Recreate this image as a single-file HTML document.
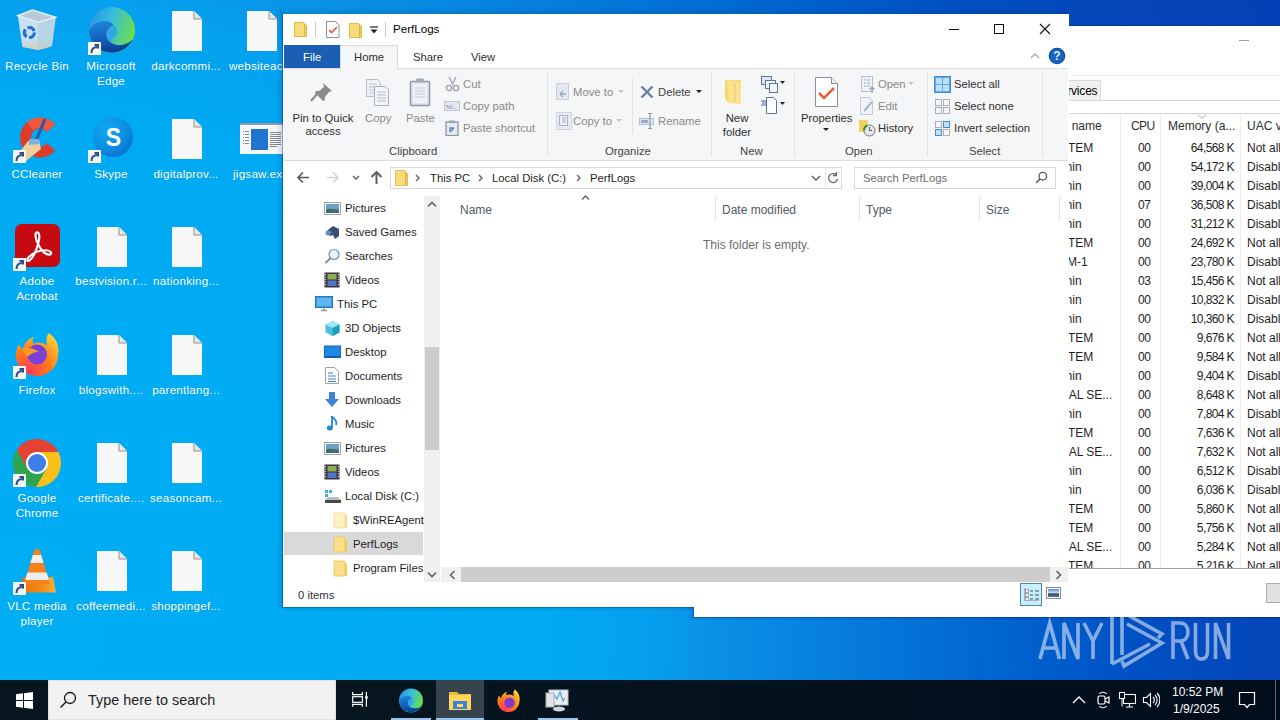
<!DOCTYPE html>
<html><head><meta charset="utf-8">
<style>
*{box-sizing:border-box;margin:0;padding:0}
html,body{width:1280px;height:720px;overflow:hidden}
body{position:relative;font-family:"Liberation Sans",sans-serif;font-size:11.3px;color:#1e1e1e;
background:radial-gradient(circle at 16px 626px,#00aef4 0px,#00aaf2 520px,#05a0ef 630px,#0a92e7 690px,#0064d0 985px,#0050c4 1120px,#0646b8 1264px,#0440b5 1410px);}
.a{position:absolute}
.t{position:absolute;white-space:nowrap}
/* desktop */
.dl{position:absolute;width:76px;text-align:center;color:#fff;font-size:11.6px;line-height:15px;letter-spacing:.25px;text-shadow:0 0 1px rgba(0,40,90,.2)}
.doc{position:absolute;width:32px;height:41px;background:linear-gradient(#fbfbfb,#f0f0f0);clip-path:polygon(0 0,72% 0,100% 20%,100% 100%,0 100%)}
.doc:after{content:"";position:absolute;right:0;top:0;width:9px;height:8px;background:#d8d8d8;clip-path:polygon(0 0,0 100%,100% 100%)}
/* windows */
#tm{position:absolute;left:694px;top:26px;width:586px;height:591px;background:#fff}
#ex{position:absolute;left:283px;top:14px;width:786px;height:593px;background:#fff}
/* taskbar */
#tb{position:absolute;left:0;top:680px;width:1280px;height:40px;background:linear-gradient(90deg,#07161e 0%,#05141e 45%,#020d1c 100%)}
#exc .t{margin-top:1px}
#exc .tt{margin-top:0}
</style></head>
<body>
<div id="desk">
<!-- labels -->
<div class="dl" style="left:-1px;top:58px">Recycle Bin</div>
<div class="dl" style="left:73px;top:58px">Microsoft<br>Edge</div>
<div class="dl" style="left:148px;top:58px">darkcommi...</div>
<div class="dl" style="left:223px;top:58px">websiteac...</div>
<div class="dl" style="left:-1px;top:166px">CCleaner</div>
<div class="dl" style="left:73px;top:166px">Skype</div>
<div class="dl" style="left:148px;top:166px">digitalprov...</div>
<div class="dl" style="left:223px;top:166px">jigsaw.exe</div>
<div class="dl" style="left:-1px;top:273px">Adobe<br>Acrobat</div>
<div class="dl" style="left:73px;top:273px">bestvision.r...</div>
<div class="dl" style="left:148px;top:273px">nationking...</div>
<div class="dl" style="left:-1px;top:382px">Firefox</div>
<div class="dl" style="left:73px;top:382px">blogswith....</div>
<div class="dl" style="left:148px;top:382px">parentlang...</div>
<div class="dl" style="left:-1px;top:490px">Google<br>Chrome</div>
<div class="dl" style="left:73px;top:490px">certificate....</div>
<div class="dl" style="left:148px;top:490px">seasoncam...</div>
<div class="dl" style="left:-1px;top:598px">VLC media<br>player</div>
<div class="dl" style="left:73px;top:598px">coffeemedi...</div>
<div class="dl" style="left:148px;top:598px">shoppingef...</div>
<!-- document icons -->
<svg class="a" style="left:171px;top:10px" width="32" height="42" viewBox="0 0 32 42"><path d="M1 1h22l8 8v32H1z" fill="#f7f7f8"/><path d="M23 1v8h8" fill="#e6e6e6" stroke="#9b8f85" stroke-width="1"/></svg>
<svg class="a" style="left:246px;top:10px" width="32" height="42" viewBox="0 0 32 42"><path d="M1 1h22l8 8v32H1z" fill="#f7f7f8"/><path d="M23 1v8h8" fill="#e6e6e6" stroke="#9b8f85" stroke-width="1"/></svg>
<svg class="a" style="left:171px;top:118px" width="32" height="42" viewBox="0 0 32 42"><path d="M1 1h22l8 8v32H1z" fill="#f7f7f8"/><path d="M23 1v8h8" fill="#e6e6e6" stroke="#9b8f85" stroke-width="1"/></svg>
<svg class="a" style="left:96px;top:226px" width="32" height="42" viewBox="0 0 32 42"><path d="M1 1h22l8 8v32H1z" fill="#f7f7f8"/><path d="M23 1v8h8" fill="#e6e6e6" stroke="#9b8f85" stroke-width="1"/></svg>
<svg class="a" style="left:171px;top:226px" width="32" height="42" viewBox="0 0 32 42"><path d="M1 1h22l8 8v32H1z" fill="#f7f7f8"/><path d="M23 1v8h8" fill="#e6e6e6" stroke="#9b8f85" stroke-width="1"/></svg>
<svg class="a" style="left:96px;top:334px" width="32" height="42" viewBox="0 0 32 42"><path d="M1 1h22l8 8v32H1z" fill="#f7f7f8"/><path d="M23 1v8h8" fill="#e6e6e6" stroke="#9b8f85" stroke-width="1"/></svg>
<svg class="a" style="left:171px;top:334px" width="32" height="42" viewBox="0 0 32 42"><path d="M1 1h22l8 8v32H1z" fill="#f7f7f8"/><path d="M23 1v8h8" fill="#e6e6e6" stroke="#9b8f85" stroke-width="1"/></svg>
<svg class="a" style="left:96px;top:442px" width="32" height="42" viewBox="0 0 32 42"><path d="M1 1h22l8 8v32H1z" fill="#f7f7f8"/><path d="M23 1v8h8" fill="#e6e6e6" stroke="#9b8f85" stroke-width="1"/></svg>
<svg class="a" style="left:171px;top:442px" width="32" height="42" viewBox="0 0 32 42"><path d="M1 1h22l8 8v32H1z" fill="#f7f7f8"/><path d="M23 1v8h8" fill="#e6e6e6" stroke="#9b8f85" stroke-width="1"/></svg>
<svg class="a" style="left:96px;top:550px" width="32" height="42" viewBox="0 0 32 42"><path d="M1 1h22l8 8v32H1z" fill="#f7f7f8"/><path d="M23 1v8h8" fill="#e6e6e6" stroke="#9b8f85" stroke-width="1"/></svg>
<svg class="a" style="left:171px;top:550px" width="32" height="42" viewBox="0 0 32 42"><path d="M1 1h22l8 8v32H1z" fill="#f7f7f8"/><path d="M23 1v8h8" fill="#e6e6e6" stroke="#9b8f85" stroke-width="1"/></svg>
<!-- recycle bin -->
<svg class="a" style="left:13px;top:6px" width="48" height="48" viewBox="0 0 48 48"><defs><linearGradient id="rbg" x1="0" y1="0" x2="0" y2="1"><stop offset="0" stop-color="#e2ebf2"/><stop offset=".7" stop-color="#dfe6ec"/><stop offset="1" stop-color="#f3d3b8"/></linearGradient><linearGradient id="rbg2" x1="0" y1="0" x2="0" y2="1"><stop offset="0" stop-color="#cfdbe4"/><stop offset=".75" stop-color="#d3dbe2"/><stop offset="1" stop-color="#f0cdb0"/></linearGradient></defs><path d="M4.8 9.6L25.8 16.2 25.8 44.2 9.4 41.1z" fill="url(#rbg)" opacity=".88"/><path d="M25.8 16.2L42.9 11.2 39 40.3 25.8 44.2z" fill="url(#rbg2)" opacity=".88"/><path d="M4.8 9.6L19.5 3.8 42.9 11.2 25.8 16.2z" fill="#c2d2de" stroke="#eef5fa" stroke-width="1.2"/><path d="M8 10l11.5-4.2 19 6-12.5 3.4z" fill="#b8cad8"/><circle cx="16.4" cy="26.5" r="5" fill="none" stroke="#1d6ed0" stroke-width="3.2" stroke-dasharray="8 2.5"/></svg>
<!-- edge -->
<svg class="a" style="left:87px;top:6px" width="50" height="48" viewBox="0 0 50 48"><defs><linearGradient id="eg1" x1="0" y1=".2" x2="1" y2=".5"><stop offset="0" stop-color="#2596e0"/><stop offset=".45" stop-color="#35bce0"/><stop offset="1" stop-color="#6ee048"/></linearGradient><linearGradient id="eg2" x1=".2" y1="0" x2=".5" y2="1"><stop offset="0" stop-color="#1e88de"/><stop offset="1" stop-color="#0a3f96"/></linearGradient></defs><circle cx="25" cy="24" r="23" fill="url(#eg1)"/><path d="M2 25A23 23 0 0 0 46 33C40 40 29 41 23 36C17 30 19 22 27 19C20 12 7 14 2 25Z" fill="url(#eg2)"/><path d="M23 36C17 30 19 22 27 19C30 22 31 26 29 29C27 32 24 34 23 36Z" fill="#33a6e8"/></svg>
<!-- ccleaner -->
<svg class="a" style="left:13px;top:114px" width="50" height="48" viewBox="0 0 50 48"><path d="M42.3 10.6A20 20 0 1 0 42.3 36.4L33.9 29.3A9 9 0 1 1 33.9 17.7Z" fill="#de3b2b"/><path d="M42.3 10.6A20 20 0 0 0 14 8L20 16A9 9 0 0 1 33.9 17.7Z" fill="#ef5a3e"/><path d="M32 5L23 27" stroke="#2a5aa5" stroke-width="3"/><path d="M15 27l11-1 2 9-15 12-8-7z" fill="#f0cf9e"/><path d="M16 25l10 0 1 5-11 1z" fill="#7fb0dc"/></svg>
<!-- skype -->
<svg class="a" style="left:87px;top:114px" width="50" height="48" viewBox="0 0 50 48"><defs><radialGradient id="skg" cx=".35" cy=".3" r=".8"><stop offset="0" stop-color="#12a6f2"/><stop offset=".6" stop-color="#0c8ee2"/><stop offset="1" stop-color="#0a6fcc"/></radialGradient></defs><circle cx="26" cy="23" r="20" fill="url(#skg)"/><text x="26.5" y="32.5" text-anchor="middle" font-family="Liberation Sans" font-weight="bold" font-size="25" fill="#fff" transform="translate(26.5 0) scale(.92 1) translate(-26.5 0)">S</text></svg>
<!-- jigsaw -->
<svg class="a" style="left:240px;top:122px" width="43" height="32" viewBox="0 0 43 32"><rect x="0" y="1" width="43" height="31" fill="#f4f6f9"/><rect x="0" y="1" width="43" height="2" fill="#8f9aa6"/><rect x="11" y="7" width="17" height="21" fill="#1f74d0"/><path d="M30 10.5h11M30 12.5h11M30 14.5h11M30 16.5h11M30 18.5h11M30 20.5h11M30 22.5h11M30 24.5h7" stroke="#7d8894" stroke-width="1"/><path d="M3 9.5h1M5 9.5h4M3 12.5h1M5 12.5h4M3 15.5h1M5 15.5h4M3 18.5h1M5 18.5h4M3 21.5h1M5 21.5h4" stroke="#7d8894" stroke-width="1"/></svg>
<!-- adobe -->
<svg class="a" style="left:13px;top:222px" width="48" height="48" viewBox="0 0 48 48"><rect x="2" y="2" width="45" height="43" rx="7" fill="#c70a10"/><path transform="translate(26 24) scale(.85) translate(-26 -24)" d="M24 8c-3 0-3 6 1 14 4 8 9 13 14 12 3-1 1-5-6-5-6 0-14 3-19 8-3 3-2 6 1 4 5-4 9-15 11-24 1-5 0-9-2-9z" fill="none" stroke="#fff" stroke-width="2.5"/></svg>
<!-- firefox -->
<svg class="a" style="left:13px;top:330px" width="48" height="48" viewBox="0 0 48 48"><defs><radialGradient id="ff1" cx=".3" cy=".9" r="1"><stop offset="0" stop-color="#ff3a5a"/><stop offset=".5" stop-color="#ff7a18"/><stop offset="1" stop-color="#ffd23a"/></radialGradient></defs><path d="M24 46A21 21 0 0 1 6 14c1 3 3 5 4 5 1-6 6-11 11-12-2 3-2 6 0 7 4-3 10-1 13 2-1-5-1-10 2-13 7 5 11 13 9 22A21 21 0 0 1 24 46z" fill="url(#ff1)"/><circle cx="24" cy="24.5" r="10" fill="#7a40d8"/><path d="M9 19c5-2 12-1 17 3-5 0-9 2-12 5" fill="#ff9a20"/></svg>
<!-- chrome -->
<svg class="a" style="left:13px;top:438px" width="50" height="50" viewBox="0 0 50 50"><path d="M24 14L45.3 14A24 24 0 0 0 3.8 12.05L14.5 30.5Z" fill="#e44235"/><path d="M45.3 14A24 24 0 0 1 22.9 49L33.5 30.5 24 14Z" fill="#fbbf1a"/><path d="M22.9 49A24 24 0 0 1 3.8 12.05L14.5 30.5 33.5 30.5Z" fill="#2ea44f"/><circle cx="24" cy="25" r="11" fill="#fff"/><circle cx="24" cy="25" r="9" fill="#3d7fe6"/></svg>
<!-- vlc -->
<svg class="a" style="left:13px;top:546px" width="48" height="48" viewBox="0 0 48 48"><defs><linearGradient id="vlg" x1="0" y1="0" x2="1" y2="0"><stop offset="0" stop-color="#e86e08"/><stop offset=".6" stop-color="#f58c18"/><stop offset="1" stop-color="#f6b040"/></linearGradient></defs><path d="M7 46.5L10 31H40L43 46.5Z" fill="url(#vlg)"/><path d="M21 5Q24 0.5 27 5L37 38.5H11Z" fill="#f7821a"/><path d="M19.8 9H28.2L30.6 17H17.4Z" fill="#f0f0f0"/><path d="M14.3 26.5H33.7L35.8 34H12.2Z" fill="#eeeeee"/></svg>
<!-- shortcut arrows -->
<svg class="a" style="left:13px;top:150px" width="13" height="13" viewBox="0 0 13 13"><rect width="13" height="13" fill="#f4f6f8"/><path d="M3.5 11c0-4 2-6 6-6M6.5 3h3.5v3.5" fill="none" stroke="#2d4e86" stroke-width="2"/></svg>
<svg class="a" style="left:88px;top:42px" width="13" height="13" viewBox="0 0 13 13"><rect width="13" height="13" fill="#f4f6f8"/><path d="M3.5 11c0-4 2-6 6-6M6.5 3h3.5v3.5" fill="none" stroke="#2d4e86" stroke-width="2"/></svg>
<svg class="a" style="left:88px;top:150px" width="13" height="13" viewBox="0 0 13 13"><rect width="13" height="13" fill="#f4f6f8"/><path d="M3.5 11c0-4 2-6 6-6M6.5 3h3.5v3.5" fill="none" stroke="#2d4e86" stroke-width="2"/></svg>
<svg class="a" style="left:13px;top:258px" width="13" height="13" viewBox="0 0 13 13"><rect width="13" height="13" fill="#f4f6f8"/><path d="M3.5 11c0-4 2-6 6-6M6.5 3h3.5v3.5" fill="none" stroke="#2d4e86" stroke-width="2"/></svg>
<svg class="a" style="left:13px;top:366px" width="13" height="13" viewBox="0 0 13 13"><rect width="13" height="13" fill="#f4f6f8"/><path d="M3.5 11c0-4 2-6 6-6M6.5 3h3.5v3.5" fill="none" stroke="#2d4e86" stroke-width="2"/></svg>
<svg class="a" style="left:13px;top:474px" width="13" height="13" viewBox="0 0 13 13"><rect width="13" height="13" fill="#f4f6f8"/><path d="M3.5 11c0-4 2-6 6-6M6.5 3h3.5v3.5" fill="none" stroke="#2d4e86" stroke-width="2"/></svg>
<svg class="a" style="left:13px;top:582px" width="13" height="13" viewBox="0 0 13 13"><rect width="13" height="13" fill="#f4f6f8"/><path d="M3.5 11c0-4 2-6 6-6M6.5 3h3.5v3.5" fill="none" stroke="#2d4e86" stroke-width="2"/></svg>
</div>
<div class="a" style="left:688px;top:26px;width:5px;height:594px;background:linear-gradient(90deg,rgba(0,30,90,0),rgba(0,30,90,.14))"></div>
<div class="a" style="left:694px;top:618px;width:586px;height:3px;background:linear-gradient(180deg,rgba(0,30,90,.12),rgba(0,30,90,0))"></div>
<div id="tm"></div>
<div id="tmc" class="a" style="left:694px;top:26px;width:586px;height:591px;overflow:hidden;font-size:12px">
<div class="a" style="left:545px;top:14px;width:10px;height:1px;background:#a0a0a0"></div>
<div class="a" style="left:0;top:49px;width:586px;height:1px;background:#f0f0f0"></div>
<div class="a" style="left:330px;top:54px;width:77px;height:21px;background:#f0f0f0;border:1px solid #d9d9d9;border-bottom:none"></div>
<div class="t" style="left:359px;top:58px;color:#000;letter-spacing:-.2px">Services</div>
<div class="a" style="left:0;top:74px;width:586px;height:1px;background:#d9d9d9"></div>
<div class="a" style="left:0;top:87px;width:586px;height:1px;background:#d5d5d5"></div>
<div class="a" style="left:426px;top:88px;width:1px;height:454px;background:#ededed"></div>
<div class="a" style="left:466px;top:88px;width:1px;height:454px;background:#ededed"></div>
<div class="a" style="left:546px;top:88px;width:1px;height:454px;background:#ededed"></div>
<div class="t" style="left:349px;top:93px;color:#2e2e2e">User name</div>
<div class="t" style="left:437px;top:93px;color:#2e2e2e;letter-spacing:-.6px">CPU</div>
<div class="t" style="left:474px;top:93px;color:#2e2e2e">Memory (a...</div>
<div class="t" style="left:553px;top:93px;color:#2e2e2e">UAC virtualization</div>
<svg class="a" style="left:503px;top:88px" width="10" height="5" viewBox="0 0 10 5"><path d="M1 .5l4 4 4-4" fill="none" stroke="#aaa"/></svg>
<div class="t" style="left:350px;top:115px;color:#1e1e1e">SYSTEM</div>
<div class="t" style="left:444px;top:115px;color:#1e1e1e;letter-spacing:-.5px">00</div>
<div class="t" style="left:460px;top:115px;width:80px;text-align:right;color:#1e1e1e;letter-spacing:-.6px">64,568 K</div>
<div class="t" style="left:553px;top:115px;color:#1e1e1e">Not allowed</div>
<div class="t" style="left:355px;top:134px;color:#1e1e1e">admin</div>
<div class="t" style="left:444px;top:134px;color:#1e1e1e;letter-spacing:-.5px">00</div>
<div class="t" style="left:460px;top:134px;width:80px;text-align:right;color:#1e1e1e;letter-spacing:-.6px">54,172 K</div>
<div class="t" style="left:553px;top:134px;color:#1e1e1e">Disabled</div>
<div class="t" style="left:355px;top:153px;color:#1e1e1e">admin</div>
<div class="t" style="left:444px;top:153px;color:#1e1e1e;letter-spacing:-.5px">00</div>
<div class="t" style="left:460px;top:153px;width:80px;text-align:right;color:#1e1e1e;letter-spacing:-.6px">39,004 K</div>
<div class="t" style="left:553px;top:153px;color:#1e1e1e">Disabled</div>
<div class="t" style="left:355px;top:172px;color:#1e1e1e">admin</div>
<div class="t" style="left:444px;top:172px;color:#1e1e1e;letter-spacing:-.5px">07</div>
<div class="t" style="left:460px;top:172px;width:80px;text-align:right;color:#1e1e1e;letter-spacing:-.6px">36,508 K</div>
<div class="t" style="left:553px;top:172px;color:#1e1e1e">Disabled</div>
<div class="t" style="left:355px;top:191px;color:#1e1e1e">admin</div>
<div class="t" style="left:444px;top:191px;color:#1e1e1e;letter-spacing:-.5px">00</div>
<div class="t" style="left:460px;top:191px;width:80px;text-align:right;color:#1e1e1e;letter-spacing:-.6px">31,212 K</div>
<div class="t" style="left:553px;top:191px;color:#1e1e1e">Disabled</div>
<div class="t" style="left:350px;top:210px;color:#1e1e1e">SYSTEM</div>
<div class="t" style="left:444px;top:210px;color:#1e1e1e;letter-spacing:-.5px">00</div>
<div class="t" style="left:460px;top:210px;width:80px;text-align:right;color:#1e1e1e;letter-spacing:-.6px">24,692 K</div>
<div class="t" style="left:553px;top:210px;color:#1e1e1e">Not allowed</div>
<div class="t" style="left:353px;top:229px;color:#1e1e1e">DWM-1</div>
<div class="t" style="left:444px;top:229px;color:#1e1e1e;letter-spacing:-.5px">00</div>
<div class="t" style="left:460px;top:229px;width:80px;text-align:right;color:#1e1e1e;letter-spacing:-.6px">23,780 K</div>
<div class="t" style="left:553px;top:229px;color:#1e1e1e">Disabled</div>
<div class="t" style="left:355px;top:248px;color:#1e1e1e">admin</div>
<div class="t" style="left:444px;top:248px;color:#1e1e1e;letter-spacing:-.5px">03</div>
<div class="t" style="left:460px;top:248px;width:80px;text-align:right;color:#1e1e1e;letter-spacing:-.6px">15,456 K</div>
<div class="t" style="left:553px;top:248px;color:#1e1e1e">Not allowed</div>
<div class="t" style="left:355px;top:267px;color:#1e1e1e">admin</div>
<div class="t" style="left:444px;top:267px;color:#1e1e1e;letter-spacing:-.5px">00</div>
<div class="t" style="left:460px;top:267px;width:80px;text-align:right;color:#1e1e1e;letter-spacing:-.6px">10,832 K</div>
<div class="t" style="left:553px;top:267px;color:#1e1e1e">Disabled</div>
<div class="t" style="left:355px;top:286px;color:#1e1e1e">admin</div>
<div class="t" style="left:444px;top:286px;color:#1e1e1e;letter-spacing:-.5px">00</div>
<div class="t" style="left:460px;top:286px;width:80px;text-align:right;color:#1e1e1e;letter-spacing:-.6px">10,360 K</div>
<div class="t" style="left:553px;top:286px;color:#1e1e1e">Disabled</div>
<div class="t" style="left:350px;top:305px;color:#1e1e1e">SYSTEM</div>
<div class="t" style="left:444px;top:305px;color:#1e1e1e;letter-spacing:-.5px">00</div>
<div class="t" style="left:460px;top:305px;width:80px;text-align:right;color:#1e1e1e;letter-spacing:-.6px">9,676 K</div>
<div class="t" style="left:553px;top:305px;color:#1e1e1e">Not allowed</div>
<div class="t" style="left:350px;top:324px;color:#1e1e1e">SYSTEM</div>
<div class="t" style="left:444px;top:324px;color:#1e1e1e;letter-spacing:-.5px">00</div>
<div class="t" style="left:460px;top:324px;width:80px;text-align:right;color:#1e1e1e;letter-spacing:-.6px">9,584 K</div>
<div class="t" style="left:553px;top:324px;color:#1e1e1e">Not allowed</div>
<div class="t" style="left:355px;top:343px;color:#1e1e1e">admin</div>
<div class="t" style="left:444px;top:343px;color:#1e1e1e;letter-spacing:-.5px">00</div>
<div class="t" style="left:460px;top:343px;width:80px;text-align:right;color:#1e1e1e;letter-spacing:-.6px">9,404 K</div>
<div class="t" style="left:553px;top:343px;color:#1e1e1e">Disabled</div>
<div class="t" style="left:350px;top:362px;color:#1e1e1e">LOCAL SE...</div>
<div class="t" style="left:444px;top:362px;color:#1e1e1e;letter-spacing:-.5px">00</div>
<div class="t" style="left:460px;top:362px;width:80px;text-align:right;color:#1e1e1e;letter-spacing:-.6px">8,648 K</div>
<div class="t" style="left:553px;top:362px;color:#1e1e1e">Not allowed</div>
<div class="t" style="left:355px;top:381px;color:#1e1e1e">admin</div>
<div class="t" style="left:444px;top:381px;color:#1e1e1e;letter-spacing:-.5px">00</div>
<div class="t" style="left:460px;top:381px;width:80px;text-align:right;color:#1e1e1e;letter-spacing:-.6px">7,804 K</div>
<div class="t" style="left:553px;top:381px;color:#1e1e1e">Disabled</div>
<div class="t" style="left:350px;top:400px;color:#1e1e1e">SYSTEM</div>
<div class="t" style="left:444px;top:400px;color:#1e1e1e;letter-spacing:-.5px">00</div>
<div class="t" style="left:460px;top:400px;width:80px;text-align:right;color:#1e1e1e;letter-spacing:-.6px">7,636 K</div>
<div class="t" style="left:553px;top:400px;color:#1e1e1e">Not allowed</div>
<div class="t" style="left:350px;top:419px;color:#1e1e1e">LOCAL SE...</div>
<div class="t" style="left:444px;top:419px;color:#1e1e1e;letter-spacing:-.5px">00</div>
<div class="t" style="left:460px;top:419px;width:80px;text-align:right;color:#1e1e1e;letter-spacing:-.6px">7,632 K</div>
<div class="t" style="left:553px;top:419px;color:#1e1e1e">Not allowed</div>
<div class="t" style="left:355px;top:438px;color:#1e1e1e">admin</div>
<div class="t" style="left:444px;top:438px;color:#1e1e1e;letter-spacing:-.5px">00</div>
<div class="t" style="left:460px;top:438px;width:80px;text-align:right;color:#1e1e1e;letter-spacing:-.6px">6,512 K</div>
<div class="t" style="left:553px;top:438px;color:#1e1e1e">Disabled</div>
<div class="t" style="left:355px;top:457px;color:#1e1e1e">admin</div>
<div class="t" style="left:444px;top:457px;color:#1e1e1e;letter-spacing:-.5px">00</div>
<div class="t" style="left:460px;top:457px;width:80px;text-align:right;color:#1e1e1e;letter-spacing:-.6px">6,036 K</div>
<div class="t" style="left:553px;top:457px;color:#1e1e1e">Disabled</div>
<div class="t" style="left:350px;top:476px;color:#1e1e1e">SYSTEM</div>
<div class="t" style="left:444px;top:476px;color:#1e1e1e;letter-spacing:-.5px">00</div>
<div class="t" style="left:460px;top:476px;width:80px;text-align:right;color:#1e1e1e;letter-spacing:-.6px">5,860 K</div>
<div class="t" style="left:553px;top:476px;color:#1e1e1e">Not allowed</div>
<div class="t" style="left:350px;top:495px;color:#1e1e1e">SYSTEM</div>
<div class="t" style="left:444px;top:495px;color:#1e1e1e;letter-spacing:-.5px">00</div>
<div class="t" style="left:460px;top:495px;width:80px;text-align:right;color:#1e1e1e;letter-spacing:-.6px">5,756 K</div>
<div class="t" style="left:553px;top:495px;color:#1e1e1e">Not allowed</div>
<div class="t" style="left:350px;top:514px;color:#1e1e1e">LOCAL SE...</div>
<div class="t" style="left:444px;top:514px;color:#1e1e1e;letter-spacing:-.5px">00</div>
<div class="t" style="left:460px;top:514px;width:80px;text-align:right;color:#1e1e1e;letter-spacing:-.6px">5,284 K</div>
<div class="t" style="left:553px;top:514px;color:#1e1e1e">Not allowed</div>
<div class="t" style="left:350px;top:533px;color:#1e1e1e">SYSTEM</div>
<div class="t" style="left:444px;top:533px;color:#1e1e1e;letter-spacing:-.5px">00</div>
<div class="t" style="left:460px;top:533px;width:80px;text-align:right;color:#1e1e1e;letter-spacing:-.6px">5,216 K</div>
<div class="t" style="left:553px;top:533px;color:#1e1e1e">Not allowed</div>
<div class="a" style="left:0;top:542px;width:586px;height:49px;background:#fff;border-top:1px solid #a0a0a0"></div>
<div class="a" style="left:572px;top:557px;width:40px;height:20px;background:#e1e1e1;border:1px solid #adadad"></div>
</div>
<div class="a" style="left:693px;top:26px;width:1px;height:592px;background:rgba(0,40,110,.4)"></div>
<div class="a" style="left:693px;top:617px;width:587px;height:1px;background:rgba(0,40,110,.45)"></div>
<div class="a" style="left:693px;top:25px;width:587px;height:1px;background:rgba(0,40,110,.4)"></div>
<div class="a" style="left:276px;top:10px;width:7px;height:598px;background:linear-gradient(90deg,rgba(0,30,90,0),rgba(0,30,90,.16))"></div>
<div class="a" style="left:283px;top:7px;width:786px;height:7px;background:linear-gradient(180deg,rgba(0,30,90,0),rgba(0,30,90,.14))"></div>
<div class="a" style="left:282px;top:14px;width:1px;height:594px;background:rgba(0,40,110,.35)"></div>
<div class="a" style="left:282px;top:607px;width:412px;height:1px;background:rgba(0,40,110,.4)"></div>
<div class="a" style="left:283px;top:608px;width:411px;height:3px;background:linear-gradient(180deg,rgba(0,30,90,.12),rgba(0,30,90,0))"></div>
<div id="ex"></div>
<div id="exc">
<!-- title bar -->
<svg class="a" style="left:293px;top:20px" width="16" height="18" viewBox="0 0 16 18"><path d="M1.5 2.5h9l1 1v13h-10z" fill="#f9dc7a" stroke="#e0b94a"/><path d="M11.5 3.5l2 2v11h-2z" fill="#eccb5f" stroke="#d8b040" stroke-width=".8"/></svg>
<div class="a" style="left:315px;top:22px;width:1px;height:15px;background:#c8c8c8"></div>
<svg class="a" style="left:326px;top:21px" width="14" height="17" viewBox="0 0 14 17"><path d="M.5.5h9l3.5 3.5v12.5H.5z" fill="#fff" stroke="#8a8f99"/><path d="M3 9l2.5 2.5L11 6" fill="none" stroke="#e0553b" stroke-width="1.6"/></svg>
<svg class="a" style="left:348px;top:21px" width="16" height="18" viewBox="0 0 16 18"><path d="M1.5 2.5h9l1 1v13h-10z" fill="#f9dc7a" stroke="#e0b94a"/><path d="M11.5 3.5l2 2v11h-2z" fill="#eccb5f" stroke="#d8b040" stroke-width=".8"/></svg>
<svg class="a" style="left:369px;top:26px" width="10" height="8" viewBox="0 0 10 8"><path d="M1 1h8" stroke="#222" stroke-width="1.2"/><path d="M1.5 3.5h7l-3.5 4z" fill="#222"/></svg>
<div class="a" style="left:385px;top:22px;width:1px;height:15px;background:#c8c8c8"></div>
<div class="t tt" style="left:393px;top:22px;font-size:11.6px;color:#000">PerfLogs</div>
<div class="a" style="left:949px;top:29px;width:10px;height:1px;background:#111"></div>
<div class="a" style="left:994px;top:24px;width:10px;height:10px;border:1px solid #111"></div>
<svg class="a" style="left:1039px;top:23px" width="12" height="12" viewBox="0 0 12 12"><path d="M1 1l10 10M11 1L1 11" stroke="#111" stroke-width="1.1"/></svg>
<!-- tabs -->
<div class="a" style="left:284px;top:45px;width:56px;height:23px;background:#1b5fb5"></div>
<div class="t" style="left:303px;top:50px;color:#fff">File</div>
<div class="a" style="left:340px;top:45px;width:58px;height:25px;background:#f5f6f7;border:1px solid #dadbdc;border-bottom:none;z-index:2"></div>
<div class="t" style="left:354px;top:50px;color:#2e2e2e;z-index:3">Home</div>
<div class="t" style="left:413px;top:50px;color:#2e2e2e">Share</div>
<div class="t" style="left:471px;top:50px;color:#2e2e2e">View</div>
<svg class="a" style="left:1030px;top:53px" width="10" height="6" viewBox="0 0 10 6"><path d="M1 5l4-4 4 4" fill="none" stroke="#a8a8a8" stroke-width="1.3"/></svg>
<svg class="a" style="left:1048px;top:47px" width="18" height="18" viewBox="0 0 18 18"><circle cx="9" cy="9" r="8.3" fill="#0e4c9c"/><circle cx="9" cy="9" r="7.2" fill="#1a62c0"/><text x="9" y="13.3" text-anchor="middle" font-family="Liberation Sans" font-weight="bold" font-size="12" fill="#d8f0ff">?</text></svg>
<!-- ribbon -->
<div class="a" style="left:284px;top:68px;width:784px;height:93px;background:#f5f6f7;border-top:1px solid #dadbdc;border-bottom:1px solid #dadbdc"></div>
<!-- ribbon content -->
<div class="t" style="left:292px;top:111px;width:62px;text-align:center;line-height:13px;color:#2e2e2e">Pin to Quick<br>access</div>
<svg class="a" style="left:310px;top:81px" width="24" height="22" viewBox="0 0 24 22"><path d="M13 2l9 8-3 1-4 5 0 3-2 1-8-8 1-2 3 0 5-4z" fill="#8c8c8c"/><path d="M7 13l-6 7" stroke="#8c8c8c" stroke-width="2.2"/></svg>
<div class="t" style="left:365px;top:111px;color:#8a8a8a">Copy</div>
<svg class="a" style="left:365px;top:78px" width="26" height="29" viewBox="0 0 26 29"><path d="M1.5 1.5h11l3 3v14h-14z" fill="#eef1f7" stroke="#b7bccb"/><path d="M9.5 8.5h11l3 3v16h-14z" fill="#f2f4f9" stroke="#a9aebd"/><path d="M12 14h9M12 17h9M12 20h9M12 23h9" stroke="#b3b9cc"/><path d="M4 6h8M4 9h5M4 12h5M4 15h5" stroke="#c0c5d3"/></svg>
<div class="t" style="left:406px;top:111px;color:#8a8a8a">Paste</div>
<svg class="a" style="left:409px;top:77px" width="22" height="30" viewBox="0 0 22 30"><rect x="1.5" y="4.5" width="19" height="24" rx="1" fill="#dfe4f0" stroke="#8f96a6" stroke-width="1.5"/><rect x="4" y="7" width="14" height="19" fill="#eef1f8"/><rect x="7" y="1.5" width="8" height="4" rx="1" fill="#a3a9b6"/><path d="M6 11h10M6 14h10M6 17h10M6 20h10" stroke="#c4c9d6"/></svg>
<div class="t" style="left:389px;top:144px;color:#444">Clipboard</div>
<svg class="a" style="left:445px;top:76px" width="15" height="16" viewBox="0 0 15 16"><path d="M4 1l4 8M11 1L7 9" stroke="#9da3ad" stroke-width="1.3"/><circle cx="4" cy="12" r="2.6" fill="none" stroke="#9da3ad" stroke-width="1.4"/><circle cx="11" cy="12" r="2.6" fill="none" stroke="#9da3ad" stroke-width="1.4"/></svg>
<div class="t" style="left:463px;top:77px;color:#8a8a8a">Cut</div>
<svg class="a" style="left:444px;top:101px" width="16" height="10" viewBox="0 0 16 10"><rect x=".5" y=".5" width="15" height="9" fill="#e3e7f2" stroke="#c1c6d4"/><text x="2" y="8" font-size="7" font-family="Liberation Serif" fill="#7a8095">W..</text></svg>
<div class="t" style="left:463px;top:99px;color:#8a8a8a">Copy path</div>
<svg class="a" style="left:445px;top:120px" width="14" height="16" viewBox="0 0 14 16"><rect x="1" y="2" width="12" height="13.5" fill="#e6e9f1" stroke="#8f96a6" stroke-width="1.3"/><rect x="4" y=".5" width="6" height="2.5" fill="#9aa0ad"/><path d="M5 12V8h4M9 8l-4 4" stroke="#5c7fb5" stroke-width="1.3" fill="none"/></svg>
<div class="t" style="left:463px;top:121px;color:#8a8a8a">Paste shortcut</div>
<div class="a" style="left:547px;top:72px;width:1px;height:85px;background:#e2e3e4"></div>
<svg class="a" style="left:556px;top:83px" width="14" height="18" viewBox="0 0 14 18"><rect x=".5" y=".5" width="12" height="16" fill="#e4e8f1" stroke="#c9cdd8"/><path d="M4 11h6M4 11l3-3M4 11l3 3" stroke="#9aa9c4" stroke-width="1.4" fill="none"/></svg>
<div class="t" style="left:573px;top:85px;color:#8a8a8a">Move to</div>
<svg class="a" style="left:618px;top:90px" width="6" height="4" viewBox="0 0 6 4"><path d="M0 0h6L3 3z" fill="#c5c5c5"/></svg>
<svg class="a" style="left:556px;top:112px" width="16" height="18" viewBox="0 0 16 18"><rect x=".5" y=".5" width="15" height="17" fill="#e8ebf3" stroke="#d0d4de"/><rect x="3.5" y="3.5" width="8" height="10" fill="#eef0f6" stroke="#a9afbe"/><path d="M6 6h4M6 8h4M6 10h4" stroke="#a9afbe"/></svg>
<div class="t" style="left:573px;top:114px;color:#8a8a8a">Copy to</div>
<svg class="a" style="left:616px;top:119px" width="6" height="4" viewBox="0 0 6 4"><path d="M0 0h6L3 3z" fill="#c5c5c5"/></svg>
<div class="a" style="left:632px;top:78px;width:1px;height:56px;background:#e2e3e4"></div>
<svg class="a" style="left:640px;top:85px" width="14" height="14" viewBox="0 0 14 14"><path d="M1.5 1.5l11 11M12.5 1.5l-11 11" stroke="#6a7fa0" stroke-width="2.4"/></svg>
<div class="t" style="left:658px;top:85px;color:#444">Delete</div>
<svg class="a" style="left:696px;top:90px" width="6" height="4" viewBox="0 0 6 4"><path d="M0 0h6L3 3z" fill="#222"/></svg>
<svg class="a" style="left:638px;top:112px" width="18" height="18" viewBox="0 0 18 18"><rect x="1.5" y="6.5" width="14" height="6" fill="#dfe5f1" stroke="#b4bdd0"/><rect x="3" y="8" width="7" height="3" fill="#95a9cb"/><path d="M12 1.5v15M10 1.5h4M10 16.5h4" stroke="#8f9aaf" stroke-width="1.2"/></svg>
<div class="t" style="left:658px;top:114px;color:#8a8a8a">Rename</div>
<div class="a" style="left:711px;top:72px;width:1px;height:85px;background:#e2e3e4"></div>
<svg class="a" style="left:723px;top:78px" width="24" height="28" viewBox="0 0 24 28"><path d="M2 2h16v23H6L2 21z" fill="#f6d66d"/><path d="M4 2l14 2v22L6 25z" fill="#fbe28e"/><path d="M12 5v18" stroke="#e6c35a" stroke-width=".8"/></svg>
<div class="t" style="left:718px;top:111px;width:38px;text-align:center;line-height:13.5px;color:#2e2e2e">New<br>folder</div>
<svg class="a" style="left:760px;top:75px" width="26" height="18" viewBox="0 0 26 18"><rect x="1.5" y="1.5" width="10" height="8" fill="#dfe6f3" stroke="#5f7595"/><rect x="5.5" y="5.5" width="10" height="8" fill="#eef1f7" stroke="#5f7595"/><rect x="9.5" y="8.5" width="8" height="9" fill="#f5f6f9" stroke="#5f7595"/><path d="M20 6h5l-2.5 3z" fill="#222"/></svg>
<svg class="a" style="left:760px;top:96px" width="26" height="18" viewBox="0 0 26 18"><path d="M6.5 1.5h7l3 3v13h-10z" fill="#fff" stroke="#5f7595"/><path d="M1 5h6M2 7h5M1 9h6" stroke="#3a6fb5"/><path d="M20 6h5l-2.5 3z" fill="#222"/></svg>
<div class="t" style="left:605px;top:144px;color:#444">Organize</div>
<div class="t" style="left:740px;top:144px;color:#444">New</div>
<div class="a" style="left:794px;top:72px;width:1px;height:85px;background:#e2e3e4"></div>
<svg class="a" style="left:815px;top:77px" width="23" height="30" viewBox="0 0 23 30"><path d="M.5.5h16l6 6v23H.5z" fill="#fff" stroke="#8a8f99"/><path d="M16.5.5v6h6" fill="#eee" stroke="#8a8f99"/><path d="M4 16l5 5 10-10" fill="none" stroke="#e2623f" stroke-width="2.5"/></svg>
<div class="t" style="left:801px;top:111px;color:#2e2e2e">Properties</div>
<svg class="a" style="left:823px;top:128px" width="6" height="4" viewBox="0 0 6 4"><path d="M0 0h6L3 3z" fill="#222"/></svg>
<svg class="a" style="left:861px;top:76px" width="16" height="18" viewBox="0 0 16 18"><rect x=".5" y=".5" width="11" height="15" fill="#eef1f7" stroke="#b9bfcc"/><path d="M3 4h2M3 7h2M3 10h2M6 4h3M6 7h3M6 10h3" stroke="#9fa8bd"/><path d="M11 17v-6M8.5 13.5L11 11l2.5 2.5" stroke="#9da9bf" stroke-width="1.5" fill="none"/></svg>
<div class="t" style="left:878px;top:77px;color:#8a8a8a">Open</div>
<svg class="a" style="left:908px;top:82px" width="6" height="4" viewBox="0 0 6 4"><path d="M0 0h6L3 3z" fill="#c5c5c5"/></svg>
<svg class="a" style="left:860px;top:97px" width="16" height="18" viewBox="0 0 16 18"><path d="M.5.5h9l3 3v14H.5z" fill="#f1f3f8" stroke="#c2c7d3"/><path d="M4 14l8-9" stroke="#a5b4cc" stroke-width="2"/></svg>
<div class="t" style="left:878px;top:99px;color:#8a8a8a">Edit</div>
<svg class="a" style="left:858px;top:119px" width="18" height="18" viewBox="0 0 18 18"><rect x="1" y="1" width="9" height="12" fill="#f3d15d"/><circle cx="11.5" cy="11.5" r="5.5" fill="#e6e6e6" stroke="#777"/><path d="M6 11.5a5.5 5.5 0 0 1 3-5" stroke="#2a9a3a" stroke-width="2" fill="none"/><path d="M11.5 8v3.5h2.5" stroke="#555" fill="none"/></svg>
<div class="t" style="left:878px;top:121px;color:#2e2e2e">History</div>
<div class="t" style="left:845px;top:144px;color:#444">Open</div>
<div class="a" style="left:927px;top:72px;width:1px;height:85px;background:#e2e3e4"></div>
<svg class="a" style="left:934px;top:76px" width="17" height="17" viewBox="0 0 17 17"><rect x=".5" y=".5" width="16" height="16" fill="#5fa8e8" stroke="#3b8fdc"/><rect x="2" y="2" width="6" height="6" fill="#bfe0fb"/><rect x="9" y="2" width="6" height="6" fill="#bfe0fb"/><rect x="2" y="9" width="6" height="6" fill="#bfe0fb"/><rect x="9" y="9" width="6" height="6" fill="#bfe0fb"/></svg>
<div class="t" style="left:954px;top:77px;color:#2e2e2e">Select all</div>
<svg class="a" style="left:934px;top:98px" width="17" height="17" viewBox="0 0 17 17"><rect x="1.5" y="1.5" width="6" height="6" fill="none" stroke="#aab0bb"/><rect x="9.5" y="1.5" width="6" height="6" fill="none" stroke="#aab0bb"/><rect x="1.5" y="9.5" width="6" height="6" fill="none" stroke="#aab0bb"/><rect x="9.5" y="9.5" width="6" height="6" fill="none" stroke="#aab0bb"/></svg>
<div class="t" style="left:954px;top:99px;color:#2e2e2e">Select none</div>
<svg class="a" style="left:934px;top:120px" width="17" height="17" viewBox="0 0 17 17"><rect x="1.5" y="9.5" width="6" height="6" fill="#bfe0fb" stroke="#3b8fdc"/><rect x="9.5" y="1.5" width="6" height="6" fill="#bfe0fb" stroke="#3b8fdc"/><rect x="1.5" y="1.5" width="6" height="6" fill="none" stroke="#aab0bb"/><rect x="9.5" y="9.5" width="6" height="6" fill="none" stroke="#aab0bb"/></svg>
<div class="t" style="left:954px;top:121px;color:#2e2e2e">Invert selection</div>
<div class="t" style="left:969px;top:144px;color:#444">Select</div>
<div class="a" style="left:1042px;top:72px;width:1px;height:85px;background:#e2e3e4"></div>
<!-- address bar -->
<svg class="a" style="left:296px;top:171px" width="14" height="13" viewBox="0 0 14 13"><path d="M13 6.5H2M7 1.5L2 6.5l5 5" fill="none" stroke="#5a5a5a" stroke-width="1.7"/></svg>
<svg class="a" style="left:326px;top:171px" width="14" height="13" viewBox="0 0 14 13"><path d="M1 6.5h11M7 1.5l5 5-5 5" fill="none" stroke="#d4d4d4" stroke-width="1.7"/></svg>
<svg class="a" style="left:352px;top:175px" width="8" height="5" viewBox="0 0 8 5"><path d="M1 1l3 3 3-3" fill="none" stroke="#666" stroke-width="1.6"/></svg>
<svg class="a" style="left:370px;top:170px" width="13" height="14" viewBox="0 0 13 14"><path d="M6.5 14V2.5M1.5 7l5-5 5 5" fill="none" stroke="#606060" stroke-width="2"/></svg>
<div class="a" style="left:390px;top:167px;width:452px;height:22px;border:1px solid #d9d9d9;background:#fff"></div>
<svg class="a" style="left:394px;top:168px" width="16" height="19" viewBox="0 0 16 19"><path d="M1.5 2.5h9l1 1v14h-10z" fill="#f9dc7a" stroke="#e3c25a"/><path d="M11.5 3.5l2 2v12h-2z" fill="#eccb5f" stroke="#d8b040" stroke-width=".8"/></svg>
<svg class="a" style="left:415px;top:174px" width="5" height="8" viewBox="0 0 5 8"><path d="M1 1l3 3-3 3" fill="none" stroke="#6a6a6a" stroke-width="1.5"/></svg>
<div class="t" style="left:430px;top:171px;color:#1e1e1e">This PC</div>
<svg class="a" style="left:478px;top:174px" width="5" height="8" viewBox="0 0 5 8"><path d="M1 1l3 3-3 3" fill="none" stroke="#6a6a6a" stroke-width="1.5"/></svg>
<div class="t" style="left:492px;top:171px;color:#1e1e1e">Local Disk (C:)</div>
<svg class="a" style="left:576px;top:174px" width="5" height="8" viewBox="0 0 5 8"><path d="M1 1l3 3-3 3" fill="none" stroke="#6a6a6a" stroke-width="1.5"/></svg>
<div class="t" style="left:590px;top:171px;color:#1e1e1e">PerfLogs</div>
<svg class="a" style="left:811px;top:175px" width="10" height="6" viewBox="0 0 10 6"><path d="M1 1l4 4 4-4" fill="none" stroke="#555" stroke-width="1.3"/></svg>
<div class="a" style="left:825px;top:168px;width:1px;height:20px;background:#e5e5e5"></div>
<svg class="a" style="left:827px;top:171px" width="13" height="14" viewBox="0 0 13 14"><path d="M10.5 8a4.5 4.5 0 1 1-1.3-4.2" fill="none" stroke="#666" stroke-width="1.3"/><path d="M9.5 1v3.5H6" fill="none" stroke="#666" stroke-width="1.3"/></svg>
<div class="a" style="left:854px;top:167px;width:202px;height:22px;border:1px solid #d9d9d9;background:#fff"></div>
<div class="t" style="left:863px;top:171px;color:#6d6d6d">Search PerfLogs</div>
<svg class="a" style="left:1035px;top:171px" width="13" height="13" viewBox="0 0 13 13"><circle cx="7.8" cy="5.2" r="3.8" fill="none" stroke="#555" stroke-width="1.3"/><path d="M5 8l-3.8 3.8" stroke="#555" stroke-width="1.6"/></svg>
<!-- nav pane -->
<div class="a" style="left:284px;top:532px;width:139px;height:23px;background:#d9d9d9"></div>
<div class="a" style="left:424px;top:196px;width:16px;height:386px;background:#f0f0f0"></div>
<div class="a" style="left:425px;top:347px;width:14px;height:103px;background:#cdcdcd"></div>
<svg class="a" style="left:427px;top:201px" width="10" height="7" viewBox="0 0 10 7"><path d="M1 5.5l4-4 4 4" fill="none" stroke="#606060" stroke-width="1.6"/></svg>
<svg class="a" style="left:427px;top:571px" width="10" height="7" viewBox="0 0 10 7"><path d="M1 1.5l4 4 4-4" fill="none" stroke="#606060" stroke-width="1.6"/></svg>
<div class="a" style="left:284px;top:196px;width:140px;height:386px;overflow:hidden">
<div class="t" style="left:61px;top:5px">Pictures</div>
<div class="t" style="left:61px;top:29px">Saved Games</div>
<div class="t" style="left:61px;top:53px">Searches</div>
<div class="t" style="left:61px;top:77px">Videos</div>
<div class="t" style="left:53px;top:101px">This PC</div>
<div class="t" style="left:61px;top:125px">3D Objects</div>
<div class="t" style="left:61px;top:149px">Desktop</div>
<div class="t" style="left:61px;top:173px">Documents</div>
<div class="t" style="left:61px;top:197px">Downloads</div>
<div class="t" style="left:61px;top:221px">Music</div>
<div class="t" style="left:61px;top:245px">Pictures</div>
<div class="t" style="left:61px;top:269px">Videos</div>
<div class="t" style="left:61px;top:293px">Local Disk (C:)</div>
<div class="t" style="left:69px;top:317px">$WinREAgent</div>
<div class="t" style="left:69px;top:341px">PerfLogs</div>
<div class="t" style="left:69px;top:365px">Program Files</div>
<!-- icons -->
<svg class="a" style="left:40px;top:6px" width="17" height="13" viewBox="0 0 17 13"><rect x=".5" y=".5" width="16" height="12" fill="#f4f6f8" stroke="#a0a6ad"/><rect x="2" y="2" width="13" height="9" fill="#6b9fc4"/><path d="M2 8c3-2 6-1 13 0v3H2z" fill="#3d6f6a"/></svg>
<svg class="a" style="left:40px;top:28px" width="18" height="16" viewBox="0 0 18 16"><path d="M9 2l6 3v7l-4 3-2-4-3 1-4-4 3-3z" fill="#3a4f73"/><path d="M3 7l3 2 3-1" fill="#6aa0d8"/><circle cx="4" cy="9" r="2.5" fill="#5b8fd1"/></svg>
<svg class="a" style="left:40px;top:52px" width="17" height="17" viewBox="0 0 17 17"><circle cx="10" cy="6.5" r="5" fill="#eaf3fb" stroke="#7a8fa8" stroke-width="1.2"/><path d="M6.5 10L1.5 15" stroke="#7a8fa8" stroke-width="2"/></svg>
<svg class="a" style="left:40px;top:76px" width="16" height="16" viewBox="0 0 16 16"><rect x=".5" y=".5" width="15" height="15" fill="#3a3a3a"/><rect x="3.5" y="2" width="9" height="5.5" fill="#8fae53"/><rect x="3.5" y="8.5" width="9" height="5.5" fill="#4e73c8"/><path d="M1.5 2v12M14.5 2v12" stroke="#ddd" stroke-dasharray="1 1.5"/></svg>
<svg class="a" style="left:31px;top:100px" width="18" height="16" viewBox="0 0 18 16"><rect x=".5" y=".5" width="17" height="11" fill="#3c9ae0" stroke="#2b78b8"/><rect x="2" y="2" width="14" height="8" fill="#5cb6f0"/><path d="M6 14.5h6M9 12v2.5" stroke="#8c9aa8" stroke-width="1.3"/></svg>
<svg class="a" style="left:40px;top:124px" width="17" height="17" viewBox="0 0 17 17"><path d="M8.5 1l7 3.5v8L8.5 16 1.5 12.5v-8z" fill="#4cc3da"/><path d="M1.5 4.5l7 3.5 7-3.5-7-3.5z" fill="#9fe6f0"/><path d="M8.5 8v8l7-3.5v-8z" fill="#1b9fc0"/></svg>
<svg class="a" style="left:40px;top:149px" width="17" height="14" viewBox="0 0 17 14"><rect x=".5" y="1" width="16" height="11.5" fill="#1e88e5" stroke="#1565c0"/><rect x="1.5" y="11" width="14" height="1.5" fill="#0d5aa7"/></svg>
<svg class="a" style="left:41px;top:171px" width="14" height="17" viewBox="0 0 14 17"><path d="M.5.5h9l4 4v12H.5z" fill="#fff" stroke="#9aa3b0"/><path d="M3 6h5M3 9h8M3 12h8M3 14.5h8" stroke="#3a7bd5" stroke-width="1.1"/></svg>
<svg class="a" style="left:40px;top:195px" width="16" height="17" viewBox="0 0 16 17"><path d="M5 1h6v7h4l-7 8-7-8h4z" fill="#3b82d8"/></svg>
<svg class="a" style="left:42px;top:219px" width="13" height="17" viewBox="0 0 13 17"><path d="M6 1v11.5" stroke="#1e8ad8" stroke-width="1.8"/><ellipse cx="3.8" cy="13" rx="3" ry="2.5" fill="#1e8ad8"/><path d="M6 1c1 3 6 4 4 9" fill="none" stroke="#1e8ad8" stroke-width="1.8"/></svg>
<svg class="a" style="left:40px;top:246px" width="17" height="13" viewBox="0 0 17 13"><rect x=".5" y=".5" width="16" height="12" fill="#f4f6f8" stroke="#a0a6ad"/><rect x="2" y="2" width="13" height="9" fill="#6b9fc4"/><path d="M2 8c3-2 6-1 13 0v3H2z" fill="#3d6f6a"/></svg>
<svg class="a" style="left:40px;top:268px" width="16" height="16" viewBox="0 0 16 16"><rect x=".5" y=".5" width="15" height="15" fill="#3a3a3a"/><rect x="3.5" y="2" width="9" height="5.5" fill="#8fae53"/><rect x="3.5" y="8.5" width="9" height="5.5" fill="#4e73c8"/><path d="M1.5 2v12M14.5 2v12" stroke="#ddd" stroke-dasharray="1 1.5"/></svg>
<svg class="a" style="left:40px;top:293px" width="18" height="15" viewBox="0 0 18 15"><rect x="1" y="1" width="3" height="3" fill="#3ab0e8"/><rect x="5" y="1" width="3" height="3" fill="#3ab0e8"/><rect x="1" y="5" width="3" height="3" fill="#3ab0e8"/><path d="M4 8h10l3 3v3H1v-3z" fill="#bcbcbc"/><rect x="1" y="11" width="16" height="3" fill="#4a4a4a"/></svg>
<svg class="a" style="left:49px;top:316px" width="15" height="17" viewBox="0 0 15 17"><path d="M1 1h10l1 1v14H1z" fill="#fdf0c4" stroke="#f3dc94" stroke-width=".8"/><path d="M12 2l2 2v12h-2z" fill="#f3dc94"/></svg>
<svg class="a" style="left:49px;top:340px" width="15" height="17" viewBox="0 0 15 17"><path d="M1 1h10l1 1v14H1z" fill="#fbe08a" stroke="#e8c35a" stroke-width=".8"/><path d="M12 2l2 2v12h-2z" fill="#eccb5f"/></svg>
<svg class="a" style="left:49px;top:364px" width="15" height="17" viewBox="0 0 15 17"><path d="M1 1h10l1 1v14H1z" fill="#fbe08a" stroke="#e8c35a" stroke-width=".8"/><path d="M12 2l2 2v12h-2z" fill="#eccb5f"/></svg>
</div>
<!-- content -->
<div class="t" style="left:460px;top:202px;color:#505a64;font-size:12px">Name</div>
<svg class="a" style="left:581px;top:195px" width="9" height="5" viewBox="0 0 9 5"><path d="M1 4.5l3.5-3.5 3.5 3.5" fill="none" stroke="#6a6a6a" stroke-width="1.5"/></svg>
<div class="a" style="left:715px;top:196px;width:1px;height:25px;background:#e5e5e5"></div>
<div class="t" style="left:722px;top:202px;color:#505a64;font-size:12px">Date modified</div>
<div class="a" style="left:859px;top:196px;width:1px;height:25px;background:#e5e5e5"></div>
<div class="t" style="left:866px;top:202px;color:#505a64;font-size:12px">Type</div>
<div class="a" style="left:979px;top:196px;width:1px;height:25px;background:#e5e5e5"></div>
<div class="t" style="left:986px;top:202px;color:#505a64;font-size:12px">Size</div>
<div class="a" style="left:1059px;top:196px;width:1px;height:25px;background:#e5e5e5"></div>
<div class="t" style="left:703px;top:237px;color:#6d6d6d;font-size:12px">This folder is empty.</div>
<!-- h scrollbar -->
<div class="a" style="left:441px;top:567px;width:627px;height:15px;background:#f0f0f0"></div>
<div class="a" style="left:461px;top:567px;width:589px;height:15px;background:#cdcdcd"></div>
<svg class="a" style="left:449px;top:570px" width="7" height="10" viewBox="0 0 7 10"><path d="M5.5 1l-4 4 4 4" fill="none" stroke="#606060" stroke-width="1.6"/></svg>
<svg class="a" style="left:1055px;top:570px" width="7" height="10" viewBox="0 0 7 10"><path d="M1.5 1l4 4-4 4" fill="none" stroke="#606060" stroke-width="1.6"/></svg>
<!-- status -->
<div class="t" style="left:298px;top:588px;color:#333">0 items</div>
<div class="a" style="left:1020px;top:583px;width:22px;height:23px;background:#c8f0fc;border:1px solid #4f86ab"></div>
<svg class="a" style="left:1024px;top:587px" width="16" height="15" viewBox="0 0 16 15"><path d="M0.5 1v12.5H15" fill="none" stroke="#b9a9d0" stroke-width="1"/><rect x="1.5" y="2.5" width="3" height="3" fill="#fff" stroke="#777" stroke-width=".6"/><rect x="1.5" y="6.5" width="3" height="3" fill="#fff" stroke="#777" stroke-width=".6"/><rect x="1.5" y="10.5" width="3" height="3" fill="#fff" stroke="#777" stroke-width=".6"/><path d="M6 4h3M11 4h4M6 8h3M11 8h4M6 12h3M11 12h4" stroke="#405060" stroke-width="1.2"/></svg>
<svg class="a" style="left:1046px;top:587px" width="16" height="13" viewBox="0 0 16 13"><rect x=".5" y=".5" width="14" height="11" fill="#fff" stroke="#8a8a96"/><defs><linearGradient id="lig" x1="0" y1="0" x2="0" y2="1"><stop offset="0" stop-color="#5a7fe0"/><stop offset=".45" stop-color="#c8dff0"/><stop offset=".6" stop-color="#3a5068"/><stop offset="1" stop-color="#607080"/></linearGradient></defs><rect x="2" y="2" width="11" height="8" fill="url(#lig)"/></svg>
</div><!-- /exc -->
<div id="tb">
<svg class="a" style="left:16px;top:12px" width="17" height="17" viewBox="0 0 17 17"><path d="M0 2.3L7 1.3v6.7H0zM8 1.2L17 0v8H8zM0 9h7v6.7L0 14.7zM8 9h9v8l-9-1.2z" fill="#fff"/></svg>
<div class="a" style="left:48px;top:0;width:288px;height:40px;background:#f2f2f2;border:1px solid #e0e0e0"></div>
<svg class="a" style="left:59px;top:11px" width="18" height="18" viewBox="0 0 18 18"><circle cx="11" cy="7" r="5.5" fill="none" stroke="#111" stroke-width="1.3"/><path d="M7 11L1.5 16.5" stroke="#111" stroke-width="1.4"/></svg>
<div class="t" style="left:88px;top:12px;font-size:14.4px;color:#222">Type here to search</div>
<svg class="a" style="left:350px;top:10px" width="20" height="19" viewBox="0 0 20 19"><path d="M2.7 2v2.6h9.7V2M2.7 16.8v-2.4h9.7v2.4" fill="none" stroke="#fff" stroke-width="1.2"/><rect x="2.7" y="6.7" width="9.7" height="5.6" fill="none" stroke="#fff" stroke-width="1.2"/><path d="M16.4 2v14.8" stroke="#fff" stroke-width="1.2"/><rect x="15.2" y="6.3" width="2.6" height="2.4" fill="#fff"/></svg>
<!-- edge -->
<svg class="a" style="left:398px;top:8px" width="26" height="25" viewBox="0 0 50 48"><defs><linearGradient id="teg1" x1="0" y1=".2" x2="1" y2=".5"><stop offset="0" stop-color="#2596e0"/><stop offset=".45" stop-color="#35bce0"/><stop offset="1" stop-color="#6ee048"/></linearGradient><linearGradient id="teg2" x1=".2" y1="0" x2=".5" y2="1"><stop offset="0" stop-color="#1e88de"/><stop offset="1" stop-color="#0a3f96"/></linearGradient></defs><circle cx="25" cy="24" r="23" fill="url(#teg1)"/><path d="M2 25A23 23 0 0 0 46 33C40 40 29 41 23 36C17 30 19 22 27 19C20 12 7 14 2 25Z" fill="url(#teg2)"/><path d="M23 36C17 30 19 22 27 19C30 22 31 26 29 29C27 32 24 34 23 36Z" fill="#33a6e8"/></svg>
<div class="a" style="left:391px;top:38px;width:40px;height:2px;background:#99c4ee"></div>
<!-- explorer active -->
<div class="a" style="left:436px;top:0;width:48px;height:40px;background:#37434d"></div>
<div class="a" style="left:436px;top:38px;width:48px;height:2px;background:#99c4ee"></div>
<svg class="a" style="left:448px;top:10px" width="24" height="21" viewBox="0 0 24 21"><path d="M1 2h8l2 2h12v16H1z" fill="#f0b93a"/><rect x="1" y="5" width="22" height="15" fill="#ffd75e"/><rect x="5" y="11" width="14" height="8" fill="#3a84d6"/><rect x="9" y="14" width="6" height="3" fill="#ffd75e"/></svg>
<!-- firefox -->
<svg class="a" style="left:496px;top:8px" width="25" height="25" viewBox="0 0 48 48"><defs><radialGradient id="tff1" cx=".3" cy=".9" r="1"><stop offset="0" stop-color="#ff3a5a"/><stop offset=".5" stop-color="#ff7a18"/><stop offset="1" stop-color="#ffd23a"/></radialGradient></defs><path d="M24 46A21 21 0 0 1 6 14c1 3 3 5 4 5 1-6 6-11 11-12-2 3-2 6 0 7 4-3 10-1 13 2-1-5-1-10 2-13 7 5 11 13 9 22A21 21 0 0 1 24 46z" fill="url(#tff1)"/><circle cx="26" cy="28" r="10" fill="#7b3bd0"/></svg>
<!-- task manager -->
<svg class="a" style="left:545px;top:9px" width="25" height="24" viewBox="0 0 25 24"><rect x="4" y="1" width="19" height="15" fill="#e8eef2" stroke="#b8c2ca"/><path d="M6 12l3-6 3 4 3-7 3 9 2-3" fill="none" stroke="#4aa0e0" stroke-width="1.2"/><rect x="1" y="4" width="8" height="14" fill="#dfe5ea" stroke="#a8b2ba"/><ellipse cx="14" cy="20" rx="6" ry="2.5" fill="#d0d6dc"/></svg>
<div class="a" style="left:538px;top:38px;width:40px;height:2px;background:#99c4ee"></div>
<!-- tray -->
<svg class="a" style="left:1072px;top:15px" width="14" height="9" viewBox="0 0 14 9"><path d="M1 8l6-6 6 6" fill="none" stroke="#fff" stroke-width="1.3"/></svg>
<svg class="a" style="left:1096px;top:11px" width="15" height="18" viewBox="0 0 15 18"><rect x="2" y="5" width="7" height="8" rx="1.5" fill="none" stroke="#fff" stroke-width="1.2"/><path d="M9 8l4-2v6l-4-2" fill="none" stroke="#fff" stroke-width="1.2"/><path d="M3 2.5a7 7 0 0 1 8 0M3 15.5a7 7 0 0 0 8 0" fill="none" stroke="#fff" stroke-width="1"/></svg>
<svg class="a" style="left:1118px;top:11px" width="18" height="18" viewBox="0 0 18 18"><rect x="5.5" y="3.5" width="12" height="9" fill="none" stroke="#fff" stroke-width="1.1"/><path d="M11.5 12.5v3M8 16h7" stroke="#fff" stroke-width="1.1"/><rect x="1.5" y="1.5" width="5" height="6" fill="#04121e" stroke="#fff" stroke-width="1"/><path d="M4 7.5v8" stroke="#fff"/></svg>
<svg class="a" style="left:1142px;top:11px" width="18" height="18" viewBox="0 0 18 18"><path d="M1.5 6.5h3l4-4v13l-4-4h-3z" fill="none" stroke="#fff" stroke-width="1.1"/><path d="M11 6a4 4 0 0 1 0 6M13 4a7 7 0 0 1 0 10M15 2a10 10 0 0 1 0 14" fill="none" stroke="#fff" stroke-width="1.1"/></svg>
<div class="t" style="left:1172px;top:5px;font-size:12px;color:#fff">10:52 PM</div>
<div class="t" style="left:1173px;top:22px;font-size:12px;color:#fff">1/9/2025</div>
<svg class="a" style="left:1238px;top:11px" width="18" height="19" viewBox="0 0 18 19"><path d="M1.5 1.5h15v12h-5l-2.5 3-2.5-3h-5z" fill="none" stroke="#fff" stroke-width="1.2"/></svg>
<div class="a" style="left:1275px;top:0;width:1px;height:40px;background:#5c6670"></div>
</div>
<!-- watermark -->
<svg class="a" style="left:1036px;top:604px" width="200" height="72" viewBox="0 0 200 72"><g fill="none" stroke="rgba(255,255,255,.52)" stroke-width="3.6" stroke-linejoin="miter"><path d="M4 55L13.7 19 23.5 55M7.5 44H20"/><path d="M28 55V19l14 36V19"/><path d="M48 19l9 18 9-18M57 37v18"/><path d="M76 60V11M76 60L114 40"/><path d="M86 51V8l40 22-4 4"/><path d="M91 20l35 19-38 23-2-5"/><path d="M137 55V19h7c5 0 8 4 8 9s-3 9-8 9h-7M145 37l7 18"/><path d="M159.5 19v28q0 8 6 8t6-8V19"/><path d="M179.5 55V19l13 36V19"/></g></svg>
</body></html>
